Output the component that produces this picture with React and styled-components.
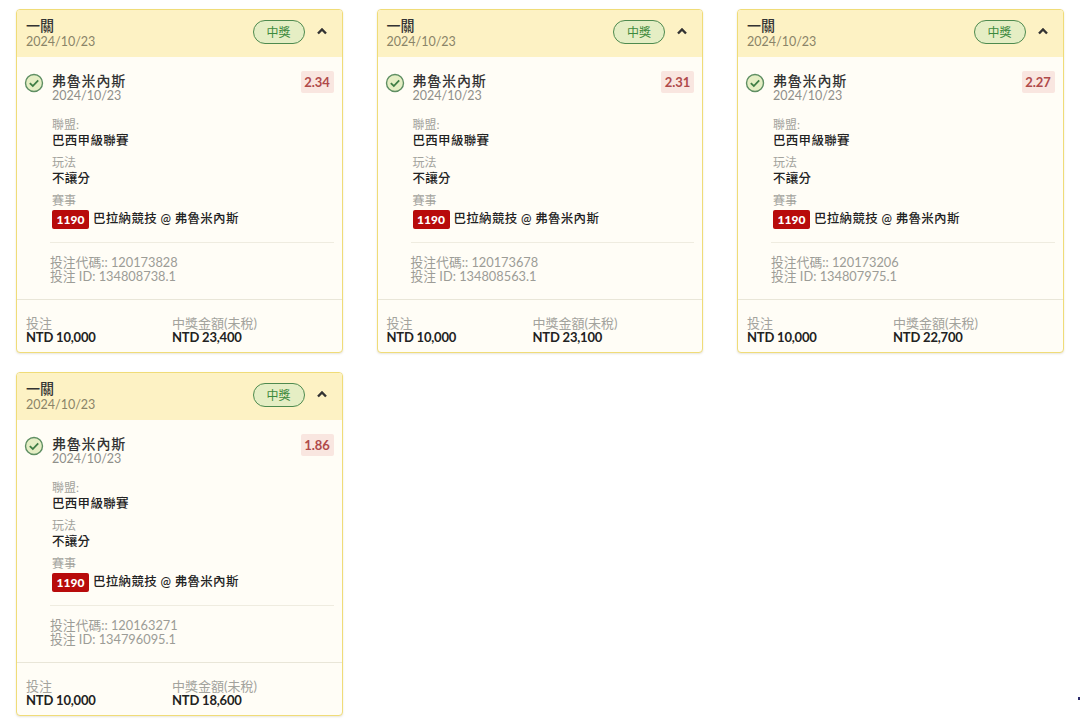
import React from 'react'
import styled, { createGlobalStyle } from 'styled-components'

const Global = createGlobalStyle`
  html, body { margin: 0; padding: 0; background: #fff; }
  body { font-family: Lato, "Noto Sans CJK TC", sans-serif; overflow: hidden; }
`

const Page = styled.div`
  position: relative;
  width: 1080px;
  height: 722px;
  box-sizing: border-box;
  padding: 9px 16px 0;
  display: grid;
  grid-template-columns: repeat(3, 326.5px);
  grid-auto-rows: 344px;
  column-gap: 34px;
  row-gap: 19px;
  align-content: start;
`

const Card = styled.div`
  box-sizing: border-box;
  height: 344px;
  border: 1px solid #f0dc78;
  border-radius: 4px;
  background: #fffdf6;
  box-shadow: 0 1px 2px rgba(120, 110, 60, 0.18);
  display: flex;
  flex-direction: column;
  overflow: hidden;
`

const Header = styled.div`
  height: 47px;
  flex: none;
  background: #fdf2c4;
  display: flex;
  align-items: center;
  padding: 0 14px 0 9px;
`

const Titles = styled.div`
  flex: 1;
  display: flex;
  flex-direction: column;
`

const Title = styled.div`
  font-size: 14px;
  font-weight: 500;
  line-height: 14px;
  color: #333;
  margin-bottom: 2px;
`

const SubDate = styled.div`
  font-size: 12.5px;
  line-height: 14px;
  color: ${p => (p.$header ? '#8a8468' : '#8f8f8a')};
`

const Badge = styled.div`
  box-sizing: border-box;
  width: 52px;
  height: 24px;
  border: 1px solid #4e8a4e;
  border-radius: 12px;
  background: #e5eec4;
  color: #3d8a3d;
  font-size: 12px;
  display: flex;
  align-items: center;
  justify-content: center;
  margin-top: -4px;
`

const Chevron = styled.svg`
  width: 12px;
  height: 9px;
  margin: -5px 0 0 11px;
`

const Body = styled.div`
  flex: 1;
  padding: 14px 8px 0 7px;
  display: flex;
  flex-direction: column;
`

const Selection = styled.div`
  display: flex;
  align-items: flex-start;
`

const Check = styled.svg`
  width: 20px;
  height: 20px;
  margin-top: 2px;
  flex: none;
`

const Pick = styled.div`
  flex: 1;
  margin-left: 8px;
  padding-top: 2px;
`

const PickName = styled.div`
  font-size: 14px;
  font-weight: 500;
  line-height: 16px;
  color: #333;
  letter-spacing: 0.8px;
`

const Odds = styled.div`
  box-sizing: border-box;
  width: 33px;
  height: 22px;
  background: #f9e6e0;
  border-radius: 2px;
  color: #b04a4a;
  font-size: 13px;
  font-weight: 700;
  display: flex;
  align-items: center;
  justify-content: center;
`

const Details = styled.div`
  padding: 15px 0 0 28px;
`

const Field = styled.div`
  margin-bottom: 7px;
`

const Label = styled.div`
  font-size: 12px;
  line-height: 14px;
  color: #a3a39d;
`

const Value = styled.div`
  font-size: 12.5px;
  font-weight: 500;
  line-height: 17px;
  letter-spacing: 0.3px;
  color: #222;
  display: flex;
  align-items: center;
`

const Code = styled.span`
  box-sizing: border-box;
  width: 37px;
  height: 19px;
  background: #b80b0b;
  border-radius: 2px;
  color: #fff;
  font-size: 12px;
  font-weight: 900;
  letter-spacing: 0;
  display: inline-flex;
  align-items: center;
  justify-content: center;
  margin: 2px 4px 0 0;
`

const Rule = styled.div`
  height: 1px;
  background: #efece0;
  margin: 6px 0 12px 26px;
`

const Ids = styled.div`
  padding-left: 26px;
  font-size: 12.8px;
  line-height: 14px;
  color: #9c9c96;
`

const Footer = styled.div`
  flex: none;
  height: 53px;
  box-sizing: border-box;
  border-top: 1px solid #e9e6d8;
  padding: 16px 0 0 9px;
  display: grid;
  grid-template-columns: 146px 1fr;
`

const Amount = styled.div`
  font-size: 13px;
  font-weight: 700;
  line-height: 14px;
  color: #222;
  letter-spacing: -0.2px;
`

const FooterLabel = styled(Label)`
  font-size: 13px;
`

const Speck = styled.div`
  position: absolute;
  left: 1078px;
  top: 697px;
  width: 2px;
  height: 3px;
  background: #2a2a6a;
`

const bets = [
  { odds: '2.34', code: '120173828', id: '134808738.1', payout: '23,400' },
  { odds: '2.31', code: '120173678', id: '134808563.1', payout: '23,100' },
  { odds: '2.27', code: '120173206', id: '134807975.1', payout: '22,700' },
  { odds: '1.86', code: '120163271', id: '134796095.1', payout: '18,600' },
]

const BetCard = ({ bet }) => (
  <Card>
    <Header>
      <Titles>
        <Title>一關</Title>
        <SubDate $header>2024/10/23</SubDate>
      </Titles>
      <Badge>中獎</Badge>
      <Chevron viewBox="0 0 12 9">
        <path d="M2 6.5 L6 2.5 L10 6.5" fill="none" stroke="#333" strokeWidth="2.4" />
      </Chevron>
    </Header>
    <Body>
      <Selection>
        <Check viewBox="0 0 20 20">
          <circle cx="10" cy="10" r="8.5" fill="#e5eec4" stroke="#5f8f63" strokeWidth="1.4" />
          <path d="M5.8 10.2 L8.8 13 L14.2 7.4" fill="none" stroke="#3f7d45" strokeWidth="1.8" />
        </Check>
        <Pick>
          <PickName>弗魯米內斯</PickName>
          <SubDate>2024/10/23</SubDate>
        </Pick>
        <Odds>{bet.odds}</Odds>
      </Selection>
      <Details>
        <Field>
          <Label>聯盟:</Label>
          <Value>巴西甲級聯賽</Value>
        </Field>
        <Field>
          <Label>玩法</Label>
          <Value>不讓分</Value>
        </Field>
        <Field>
          <Label>賽事</Label>
          <Value>
            <Code>1190</Code>
            巴拉納競技 @ 弗魯米內斯
          </Value>
        </Field>
      </Details>
      <Rule />
      <Ids>
        <div>投注代碼:: {bet.code}</div>
        <div>投注 ID: {bet.id}</div>
      </Ids>
    </Body>
    <Footer>
      <div>
        <FooterLabel>投注</FooterLabel>
        <Amount>NTD 10,000</Amount>
      </div>
      <div>
        <FooterLabel>中獎金額(未稅)</FooterLabel>
        <Amount>NTD {bet.payout}</Amount>
      </div>
    </Footer>
  </Card>
)

export default function App() {
  return (
    <Page>
      <Global />
      {bets.map(b => (
        <BetCard key={b.code} bet={b} />
      ))}
      <Speck />
    </Page>
  )
}
